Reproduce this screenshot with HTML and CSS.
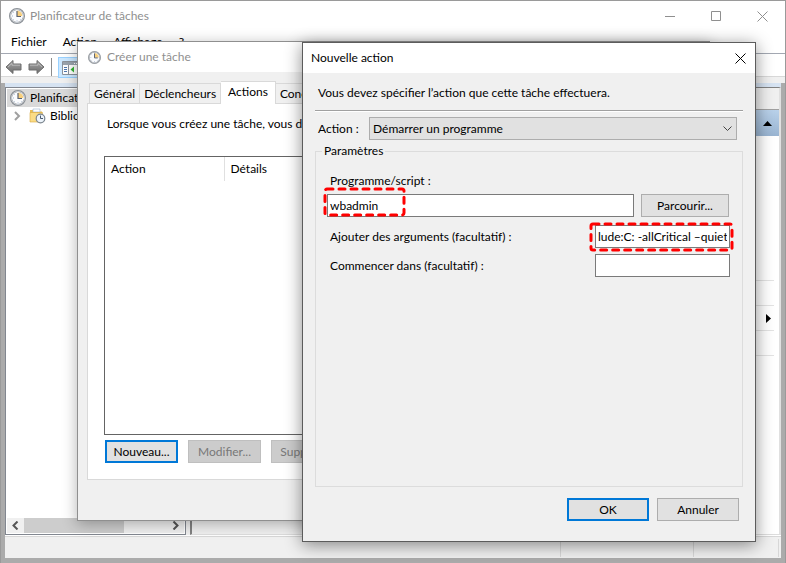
FILE: index.html
```html
<!DOCTYPE html>
<html lang="fr">
<head>
  <meta charset="UTF-8">
  <title>Planificateur de tâches</title>
  <link rel="stylesheet" href="styles.css">
</head>
<body>
  <svg width="0" height="0" class="defs" aria-hidden="true">
    <defs>
      <linearGradient id="arrowFill" x1="0" y1="0" x2="0" y2="1">
        <stop offset="0" stop-color="#a8a8a8"/>
        <stop offset="1" stop-color="#6c6c6c"/>
      </linearGradient>
    </defs>
    <symbol id="clock" viewBox="0 0 16 16">
      <circle cx="8" cy="8" r="7" fill="#fbfcfe" stroke="#8b9096" stroke-width="2"/>
      <circle cx="8" cy="8" r="6.6" fill="none" stroke="#d3d7dc" stroke-width="0.8"/>
      <path d="M8 8V2.6A5.4 5.4 0 0 1 13.4 8Z" fill="#f7cf7e"/>
      <path d="M8 3v5.5h4" fill="none" stroke="#5a6270" stroke-width="1.2"/>
      <path d="M8 12.4v1M3 8h1M4.4 4.4l.6.6M4.4 11.6l.6-.6M11.6 11.6l-.6-.6" stroke="#8fa6c4" stroke-width="0.8"/>
    </symbol>
    <symbol id="arrow" viewBox="0 0 17 16">
      <path d="M1 8L8 1.500V5H16V11H8V14.500Z" fill="url(#arrowFill)" stroke="#6e6e6e" stroke-linejoin="round"/>
      <path d="M3 8L7 4.300V6.200H15" fill="none" stroke="#c4c4c4" stroke-width="0.8"/>
    </symbol>
    <symbol id="cross" viewBox="0 0 11 11">
      <path d="M.5 .5l10 10M10.500 .5l-10 10" fill="none" stroke="currentColor"/>
    </symbol>
  </svg>

  <div class="main-window">
    <header class="titlebar">
      <svg class="icon-clock"><use href="#clock"/></svg>
      <h1>Planificateur de tâches</h1>
      <div class="win-buttons">
        <button type="button" aria-label="Réduire"><svg width="11" height="11"><path d="M0 5.500h10" stroke="currentColor"/></svg></button>
        <button type="button" aria-label="Agrandir"><svg width="11" height="11"><path d="M.5 .5h9v9h-9z" fill="none" stroke="currentColor"/></svg></button>
        <button type="button" aria-label="Fermer"><svg width="11" height="11"><use href="#cross"/></svg></button>
      </div>
    </header>
    <nav class="menubar">
      <a href="#">Fichier</a>
      <a href="#">Action</a>
      <a href="#">Affichage</a>
      <a href="#">?</a>
    </nav>
    <div class="toolbar">
      <button type="button" aria-label="Précédent"><svg width="17" height="16"><use href="#arrow"/></svg></button>
      <button type="button" aria-label="Suivant"><svg class="flip" width="17" height="16"><use href="#arrow"/></svg></button>
      <span class="tool-sep"></span>
      <button type="button" class="tool-active" aria-label="Arborescence">
        <svg width="17" height="14">
          <path d="M.5 .5h16v13h-16z" fill="#fff" stroke="#8b929b"/>
          <path d="M1 1h15v3h-15z" fill="#9aa3ad"/>
          <path d="M12 2.500h1M14 2.500h1" stroke="#fff"/>
          <path d="M6.500 4v9" stroke="#8b929b"/>
          <path d="M2 6.500h3M2 8.500h3M2 10.500h3" stroke="#4e78b0"/>
          <path d="M12 5.500v6L8.500 8.500z" fill="#35b335"/>
        </svg>
      </button>
    </div>

    <div class="frame">
      <div class="panes">
        <aside class="tree-pane">
          <ul class="tree">
            <li class="selected"><svg class="icon-clock"><use href="#clock"/></svg>Planificateur</li>
            <li class="child">
              <svg class="chevron" width="7" height="10"><path d="M1 1l4 4-4 4" fill="none" stroke="#a0a0a0" stroke-width="2"/></svg>
              <svg width="17" height="16">
                <path d="M1 2h5l1 1.500h6v10H1z" fill="#e9bd55"/>
                <path d="M4 1h7v3H4z" fill="#fff" stroke="#9cb5d0" stroke-width="0.600"/>
                <path d="M1 4.500h12.500V14H1z" fill="#fbdc85" stroke="#d9a941" stroke-width="0.600"/>
                <circle cx="11.500" cy="10.500" r="4.300" fill="#edf4fb" stroke="#7b858f" stroke-width="1.200"/>
                <path d="M11.500 7.500v3h2.500" fill="none" stroke="#4b5b70"/>
              </svg>
              Bibliothèque
            </li>
          </ul>
          <div class="scrollbar">
            <svg width="7" height="9"><path d="M5.500 .5l-4 4 4 4" fill="none" stroke="#555" stroke-width="2"/></svg>
            <span class="track"><span class="thumb"></span></span>
            <svg width="7" height="9"><path d="M1.500 .5l4 4-4 4" fill="none" stroke="#555" stroke-width="2"/></svg>
          </div>
        </aside>
        <section class="detail-pane"></section>
        <aside class="action-pane">
          <div class="action-head"></div>
          <div class="action-section"><svg width="9" height="5"><path d="M0 5l4.500-5L9 5z"/></svg></div>
          <ul class="action-list">
            <li></li>
            <li></li>
            <li><svg width="5" height="9"><path d="M0 0l5 4.500L0 9z"/></svg></li>
            <li></li>
          </ul>
        </aside>
      </div>
      <footer class="statusbar"><span></span><span></span><span></span></footer>
    </div>
  </div>

  <div class="dialog dialog-task" role="dialog" aria-labelledby="taskTitle">
    <header class="dialog-title inactive">
      <svg class="icon-clock small"><use href="#clock"/></svg>
      <h2 id="taskTitle">Créer une tâche</h2>
    </header>
    <div class="task-body">
      <div class="tabs">
        <button type="button">Général</button>
        <button type="button">Déclencheurs</button>
        <button type="button" class="active">Actions</button>
        <button type="button">Conditions</button>
      </div>
      <div class="tab-panel">
        <p>Lorsque vous créez une tâche, vous devez</p>
        <div class="list">
          <table>
            <thead><tr><th class="col-action">Action</th><th>Détails</th></tr></thead>
          </table>
        </div>
        <div class="list-buttons">
          <button type="button" class="btn default">Nouveau...</button>
          <button type="button" class="btn" disabled>Modifier...</button>
          <button type="button" class="btn" disabled>Supprimer</button>
        </div>
      </div>
    </div>
  </div>

  <form class="dialog dialog-action" role="dialog" aria-labelledby="actionTitle">
    <header class="dialog-title">
      <h2 id="actionTitle">Nouvelle action</h2>
      <button type="button" class="close" aria-label="Fermer"><svg width="11" height="11"><use href="#cross"/></svg></button>
    </header>
    <div class="action-body">
      <p class="intro">Vous devez spécifier l’action que cette tâche effectuera.</p>
      <div class="action-row">
        <label for="kind">Action :</label>
        <div class="select">
          <select id="kind"><option>Démarrer un programme</option></select>
          <svg width="9" height="6"><path d="M.5 .5l4 4 4-4" fill="none" stroke="#444"/></svg>
        </div>
      </div>
      <fieldset>
        <legend>Paramètres</legend>
        <label for="script" class="script-label">Programme/script :</label>
        <div class="script-row">
          <div class="field">
            <input type="text" id="script" value="wbadmin">
            <svg class="mark mark-script"><rect x="2" y="2" width="79" height="26" rx="2"/></svg>
          </div>
          <button type="button" class="btn browse">Parcourir...</button>
        </div>
        <div class="field-row">
          <label for="args">Ajouter des arguments (facultatif) :</label>
          <div class="field short">
            <input type="text" id="args" value="lude:C: -allCritical –quiet">
            <svg class="mark mark-args"><rect x="2" y="2" width="141" height="26" rx="2"/></svg>
          </div>
        </div>
        <div class="field-row">
          <label for="dir">Commencer dans (facultatif) :</label>
          <div class="field short"><input type="text" id="dir"></div>
        </div>
      </fieldset>
      <div class="dialog-buttons">
        <button type="button" class="btn default">OK</button>
        <button type="button" class="btn">Annuler</button>
      </div>
    </div>
  </form>
</body>
</html>
```
FILE: styles.css
```css
* { margin: 0; padding: 0; box-sizing: border-box; }
body {
  height: 100vh;
  overflow: hidden;
  position: relative;
  padding: 1px 1px 0;
  background: #9a9a9a;
  color: #000;
  font-family: Lato, "Open Sans", sans-serif;
  font-size: 12px;
  line-height: 16px;
}
button, input, select {
  font: inherit;
  color: inherit;
}
h1, h2 { font-size: 12px; font-weight: 400; }
ul { list-style: none; }
svg { display: block; flex: none; }
.defs { position: absolute; }
.icon-clock { width: 16px; height: 16px; }
.icon-clock.small { width: 13px; height: 13px; }

/* main window */
.main-window {
  height: 100%;
  display: flex;
  flex-direction: column;
  background: #ababab;
}
.titlebar {
  height: 30px;
  display: flex;
  align-items: center;
  padding-left: 8px;
  background: #fff;
  color: #8f8f8f;
}
.titlebar h1 { flex: 1; margin-left: 5px; }
.win-buttons { display: flex; }
.win-buttons button {
  width: 46px;
  height: 28px;
  display: flex;
  align-items: center;
  justify-content: center;
  border: none;
  background: none;
}
.menubar {
  height: 23px;
  display: flex;
  gap: 16px;
  padding: 3px 10px;
  background: #fff;
  border-bottom: 1px solid #a3a8b2;
}
.menubar a { color: #000; text-decoration: none; }
.toolbar {
  height: 29px;
  display: flex;
  align-items: center;
  gap: 6px;
  padding: 0 4px 3px;
  background: linear-gradient(#fff 22px, #d8d8d8 22px, #d8d8d8 23px, #f0f0f0 23px);
}
.toolbar button { border: none; background: none; }
.flip { transform: scaleX(-1); }
.tool-sep { width: 1px; height: 18px; background: #8c8c8c; }
.toolbar .tool-active {
  height: 21px;
  padding: 3px;
  background: #cce8ff;
  border: 1px solid #99d1ff;
}

.frame {
  flex: 1;
  min-height: 0;
  display: flex;
  flex-direction: column;
  margin: 0 4px 5px;
  padding-top: 4px;
  background: #d6e3f2;
}
.panes {
  flex: 1;
  display: flex;
  gap: 4px;
  background: #f0f0f0;
  border-bottom: 1px solid #fff;
}
.tree-pane {
  width: 181px;
  display: flex;
  flex-direction: column;
  justify-content: space-between;
  overflow: hidden;
  padding: 1px;
  background: #fff;
  border: 1px solid #828790;
}
.tree li {
  height: 18px;
  display: flex;
  align-items: center;
  gap: 4px;
  padding-left: 3px;
  white-space: nowrap;
}
.tree .selected { background: #d9d9d9; }
.tree .child { padding-left: 7px; }
.tree .child .chevron { margin-right: 4px; }
.scrollbar {
  height: 15px;
  display: flex;
  align-items: center;
  gap: 5px;
  padding: 0 5px;
  background: #f0f0f0;
}
.track { flex: 1; height: 15px; }
.thumb {
  display: block;
  width: 70%;
  height: 15px;
  background: #cdcdcd;
}
.detail-pane {
  flex: 1;
  border: 1px solid #828282;
  border-bottom-color: #ddd;
  border-left-width: 2px;
}
.action-pane {
  width: 180px;
  background: #fff;
  border: 1px solid #828282;
  border-right: 2px solid #e0e0e0;
  border-bottom-color: #ddd;
}
.action-head {
  height: 22px;
  background: #f0f0f0;
  border-bottom: 1px solid #a0a0a0;
}
.action-section {
  height: 26px;
  display: flex;
  align-items: center;
  justify-content: flex-end;
  padding-right: 7px;
  background: linear-gradient(#b9d1ea, #99b4d1);
}
.action-list { padding-right: 5px; }
.action-list li {
  height: 25px;
  display: flex;
  align-items: center;
  justify-content: flex-end;
  padding-right: 3px;
  border-bottom: 1px solid #e3e3e3;
}
.action-list li:first-child { height: 145px; }
.statusbar {
  height: 22px;
  display: flex;
  justify-content: flex-end;
  padding: 2px 2px 1px 0;
  background: #f0f0f0;
  border-top: 1px solid #d7d7d7;
}
.statusbar span { border-right: 1px solid #d7d7d7; }
.statusbar span:nth-child(2) { width: 133px; }
.statusbar span:nth-child(3) { width: 85px; }

/* dialogs */
.dialog {
  position: absolute;
  display: flex;
  flex-direction: column;
  background: #f0f0f0;
}
.dialog-title {
  height: 30px;
  display: flex;
  align-items: center;
  justify-content: space-between;
  padding: 0 9px 0 8px;
  background: #fff;
}
.dialog-title.inactive {
  justify-content: flex-start;
  gap: 6px;
  padding-left: 10px;
  color: #8f8f8f;
}
.close { border: none; background: none; }
.btn {
  width: 82px;
  height: 23px;
  background: #e1e1e1;
  border: 1px solid #adadad;
}
.btn.default { border: 2px solid #0078d7; }
.btn:disabled {
  background: #ccc;
  border-color: #bfbfbf;
  color: #787878;
}

.dialog-task {
  top: 41px;
  right: 76px;
  bottom: 42px;
  left: 77px;
  border: 1px solid #8f8f8f;
  box-shadow: 0 3px 14px rgba(0, 0, 0, .3);
}
.task-body {
  flex: 1;
  display: flex;
  flex-direction: column;
  padding: 9px 9px 40px;
}
.tabs {
  display: flex;
  align-items: flex-end;
  padding-left: 2px;
}
.tabs button {
  height: 20px;
  padding: 0 4px;
  background: #f0f0f0;
  border: 1px solid #d9d9d9;
  border-bottom: none;
}
.tabs button + button { border-left: none; }
.tabs .active {
  height: 23px;
  margin-bottom: -1px;
  padding: 0 7px 3px;
  background: #fff;
  position: relative;
}
.tab-panel {
  flex: 1;
  display: flex;
  flex-direction: column;
  padding: 12px 16px 16px;
  background: #fff;
  border: 1px solid #d9d9d9;
}
.tab-panel p { padding-left: 3px; }
.list {
  flex: 1;
  margin: 24px 0 5px;
  border: 1px solid #646464;
}
.list table { width: 100%; border-collapse: collapse; }
.list th {
  height: 24px;
  padding-left: 6px;
  font-weight: 400;
  text-align: left;
}
.list .col-action { width: 119px; border-right: 1px solid #e0e0e0; }
.list-buttons { display: flex; gap: 10px; padding-left: 1px; }
.list-buttons .btn { width: 73px; }

.dialog-action {
  top: 42px;
  right: 30px;
  bottom: 21px;
  left: 302px;
  border: 1px solid #5c5c5c;
  box-shadow: 0 3px 16px rgba(0, 0, 0, .45);
}
.action-body {
  flex: 1;
  display: flex;
  flex-direction: column;
  padding: 12px 12px 20px;
}
.intro {
  padding: 0 3px 9px;
  border-bottom: 1px solid #a0a0a0;
  box-shadow: 0 1px #fff;
}
.action-row {
  display: flex;
  align-items: center;
  padding: 6px 6px 3px 3px;
}
.action-row label { width: 51px; }
.select { flex: 1; position: relative; }
.select select {
  display: block;
  width: 100%;
  height: 23px;
  padding: 0 3px;
  appearance: none;
  background: #e1e1e1;
  border: 1px solid #adadad;
  border-radius: 0;
}
.select svg {
  position: absolute;
  top: 9px;
  right: 5px;
  pointer-events: none;
}
fieldset {
  flex: 1;
  min-width: 0;
  padding: 14px 12px 0 11px;
  border: 1px solid #dcdcdc;
}
legend { margin-left: -5px; padding: 0 2px; }
.script-label { display: block; margin-bottom: 5px; padding-left: 3px; }
.script-row { display: flex; gap: 7px; margin-bottom: 8px; padding-right: 1px; }
.script-row .field { flex: 1; }
.browse { width: 88px; }
.field { position: relative; }
.field input {
  display: block;
  width: 100%;
  height: 23px;
  padding: 0 2px;
  background: #fff;
  border: 1px solid #7a7a7a;
}
.field-row {
  display: flex;
  align-items: center;
  justify-content: space-between;
  margin-bottom: 6px;
  padding-left: 3px;
}
.field.short { width: 135px; }
.mark {
  position: absolute;
  height: 30px;
  overflow: visible;
  pointer-events: none;
}
.mark rect {
  fill: none;
  stroke: #f00;
  stroke-width: 3;
  stroke-linecap: round;
  stroke-dasharray: 6 6;
}
.mark-script { top: -7px; left: -4px; width: 83px; }
.mark-args { top: -3px; left: -6px; width: 145px; }
.dialog-buttons {
  display: flex;
  justify-content: flex-end;
  gap: 8px;
  padding: 11px 4px 0 0;
}
```
